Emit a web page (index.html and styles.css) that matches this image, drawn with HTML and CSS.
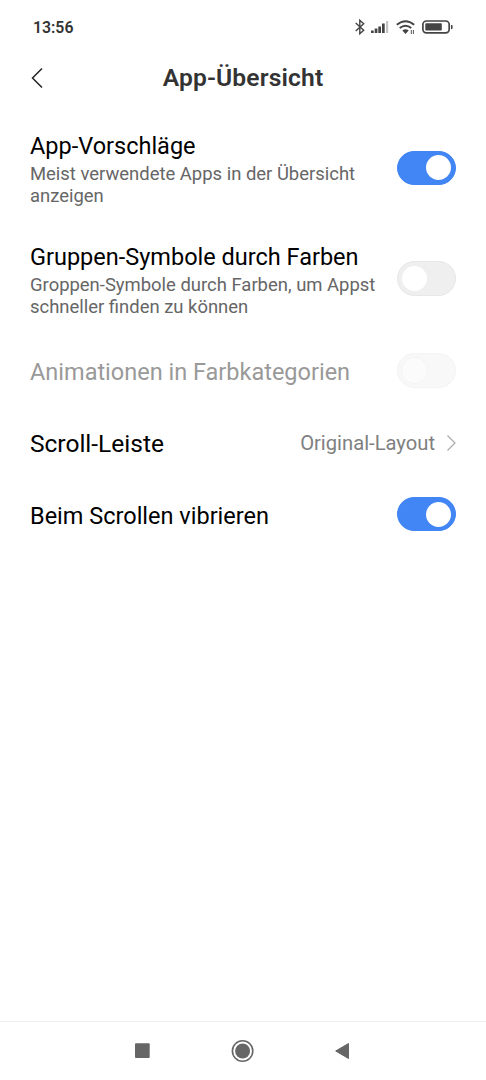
FILE: index.html
```html
<!DOCTYPE html>
<html lang="de">
<head>
<meta charset="utf-8">
<title>App-Übersicht</title>
<link rel="stylesheet" href="styles.css">
</head>
<body>
<div class="screen">
  <div class="status">
    <span class="clock">13:56</span>
    <svg class="status-icons" width="100" height="18" viewBox="354 18 100 18">
      <path d="M355.700 23l8 7.300-3.900 3.500v-13.600l3.900 3.500-8 7.300" fill="none" stroke="#444" stroke-width="1.400"/>
      <g fill="#444"><path d="M371 30.500h2.700V33H371zM374.700 28.500h2.700V33h-2.700zM378.300 26.500h2.700V33h-2.700zM382 23.500h2.700V33H382z"/><path d="M386 21h2.200v12H386z" fill="#c4c4c4"/></g>
      <g fill="none" stroke="#444" stroke-width="1.900"><path d="M396.800 24.800q8.700-7.200 17.400 0M399.700 28q5.800-4.700 11.600 0"/></g>
      <path d="M402.300 30.600q3.200-2.600 6.400 0l-3.200 3.400z" fill="#444"/>
      <path d="M411.300 30v4M413.400 30v4" stroke="#555" stroke-width="1"/>
      <rect x="422.900" y="21" width="26.300" height="11.800" rx="3.500" fill="none" stroke="#444" stroke-width="1.700"/>
      <rect x="425.300" y="23.300" width="16.500" height="7.200" rx=".8" fill="#444"/><path d="M451 25h.8q.8 0 .8.800v2.400q0 .8-.8.800h-.8z" fill="#444"/>
    </svg>
  </div>
  <header class="header">
    <svg class="back" width="14" height="22" viewBox="0 0 14 22"><path d="M12 1.500L2.500 11l9.500 9.500" fill="none" stroke="#222" stroke-width="1.500"/></svg>
    <h1>App-Übersicht</h1>
  </header>
  <main>
    <div class="row tall"><div class="label"><h2>App-Vorschläge</h2><p>Meist verwendete Apps in der Übersicht<br>anzeigen</p></div><span class="toggle on"></span></div>
    <div class="row tall"><div class="label"><h2>Gruppen-Symbole durch Farben</h2><p>Groppen-Symbole durch Farben, um Appst<br>schneller finden zu können</p></div><span class="toggle"></span></div>
    <div class="row disabled"><h2>Animationen in Farbkategorien</h2><span class="toggle"></span></div>
    <div class="row link"><h2>Scroll-Leiste</h2><span class="value">Original-Layout<svg width="10" height="18" viewBox="0 0 10 18"><path d="M1.500 1.500L9 9l-7.500 7.500" fill="none" stroke="#aaa" stroke-width="1.200"/></svg></span></div>
    <div class="row"><h2>Beim Scrollen vibrieren</h2><span class="toggle on"></span></div>
  </main>
  <nav class="nav">
    <svg width="220" height="26" viewBox="134 1038 220 26" fill="#666"><rect x="135" y="1043.300" width="14.700" height="14.700" rx="1"/><circle cx="242.600" cy="1051" r="10.200" fill="none" stroke="#666" stroke-width="1.600"/><circle cx="242.600" cy="1051" r="7.500"/><path d="M335.700 1051l12.800-7.500v15z" stroke="#666" stroke-linejoin="round"/></svg>
  </nav>
</div>
</body>
</html>
```
FILE: styles.css
```css
* { box-sizing: border-box; }
body { margin: 0; background: #fff; font-family: Roboto, sans-serif; }
h1, h2, p { margin: 0; font-weight: 400; }
svg { display: block; flex: none; }
.screen { height: 1080px; display: flex; flex-direction: column; }
.status { height: 54px; padding: 0 32px 0 33px; display: flex; align-items: center; justify-content: space-between; }
.clock { font-size: 15.800px; font-weight: 600; color: #333; }
.header { height: 50px; display: grid; grid-template-columns: 30px 1fr 30px; align-items: center; padding: 0 30px; }
.back { margin-top: -3px; }
.header h1 { margin-top: -2px; font-size: 24.600px; line-height: 30px; font-weight: 600; letter-spacing: .15px; color: #333; text-align: center; }
main { flex: 1; padding: 8px 30px 0; }
.row { height: 72px; display: flex; align-items: center; justify-content: space-between; }
.tall { height: 111px; }
.label { padding-top: 3px; }
h2 { font-size: 23.500px; line-height: 30px; color: #000; white-space: nowrap; }
.row > h2 { padding-top: 3px; }
p { margin-top: 3px; font-size: 18.450px; line-height: 21.500px; color: #666; white-space: nowrap; }
.toggle { width: 59px; height: 35px; flex: none; border-radius: 18px; background: #efefef; border: 1px solid #e7e7e7; padding: 4px; display: flex; }
.toggle::before { content: ""; width: 25px; height: 25px; border-radius: 50%; background: #fff; }
.on { height: 34px; padding: 3.500px 4px; background: #4285f4; border-color: #4285f4; justify-content: flex-end; }
.disabled h2 { color: #999; }
.disabled .toggle { background: #f8f8f8; border-color: #f4f4f4; }
.disabled .toggle::before { background: #fbfbfb; box-shadow: 0 0 0 1px #f4f4f4; }
.link h2 { font-size: 24.500px; }
.value { display: flex; align-items: center; gap: 11px; font-size: 20.200px; padding-top: 1px; color: #808080; }
.nav { height: 59px; border-top: 1px solid #eee; padding: 16px 0 0 134px; }
```
